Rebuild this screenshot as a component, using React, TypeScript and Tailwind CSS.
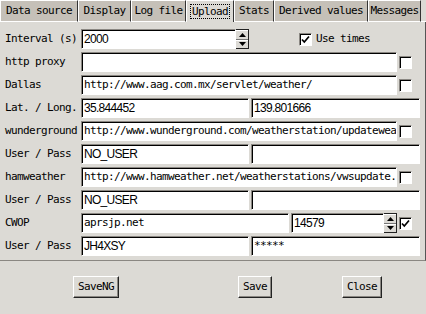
import React from 'react';

const MONO = { fontFamily: '"DejaVu Sans Mono", monospace' };

const tabs = [
  { name: 'Data source', w: 'w-[78px]' },
  { name: 'Display', w: 'w-[53px]' },
  { name: 'Log file', w: 'w-[55px]' },
  { name: 'Upload', w: 'w-[48px]', active: true },
  { name: 'Stats', w: 'w-[40px]' },
  { name: 'Derived values', w: 'w-[94px]' },
  { name: 'Messages', w: 'w-[53px]' },
];

const sunken =
  'border border-t-[#8a8782] border-l-[#8a8782] border-b-white border-r-white shadow-[inset_1px_1px_0_#000]';

const Field: React.FC<{ w: string; value?: string; mono?: boolean }> = ({ w, value = '', mono }) => (
  <div
    className={`${w} h-[20px] bg-white ${sunken} flex items-center pl-[2px] overflow-hidden whitespace-nowrap text-black ${
      mono ? 'text-[11px] tracking-[-0.62px]' : 'text-[12px] tracking-[-0.7px]'
    }`}
    style={mono ? MONO : { fontFamily: '"Liberation Sans", sans-serif' }}
  >
    {value}
  </div>
);

const Spinner: React.FC = () => (
  <div className="w-[13px] h-[20px] flex flex-col border-y border-r border-[#222] bg-[#dcdad5]">
    <div className="flex-1 flex items-center justify-center border-b border-[#777] border-t border-t-white">
      <svg width="7" height="4" viewBox="0 0 7 4"><path d="M3.5 0L7 4H0z" fill="#000" /></svg>
    </div>
    <div className="flex-1 flex items-center justify-center border-t border-t-white">
      <svg width="7" height="4" viewBox="0 0 7 4"><path d="M0 0H7L3.5 4z" fill="#000" /></svg>
    </div>
  </div>
);

const Check: React.FC<{ checked?: boolean }> = ({ checked }) => (
  <div className={`w-[13px] h-[13px] bg-white ${sunken} flex items-center justify-center`}>
    {checked && (
      <svg width="9" height="9" viewBox="0 0 9 9">
        <path d="M1 4.5L3.3 7L8 1.5" stroke="#000" strokeWidth="1.7" fill="none" />
      </svg>
    )}
  </div>
);

const Row: React.FC<{ label: string; children: React.ReactNode }> = ({ label, children }) => (
  <div className="flex items-center h-[20px]">
    <div className="w-[81px] pl-[5px] text-[11px] tracking-[-0.62px] text-black whitespace-nowrap" style={MONO}>
      {label}
    </div>
    {children}
  </div>
);

const Button: React.FC<{ label: string; w: string }> = ({ label, w }) => (
  <div
    className={`${w} h-[22px] flex items-center justify-center bg-[#dcdad5] border border-t-white border-l-white border-b-[#222] border-r-[#222] shadow-[inset_-1px_-1px_0_#8a8782] text-[11px] tracking-[-0.62px] text-black`}
    style={MONO}
  >
    {label}
  </div>
);

export default function App() {
  return (
    <div className="w-[426px] h-[314px] bg-[#dcdad5] overflow-hidden select-none">
      {/* Tab strip */}
      <div className="flex h-[22px] bg-[#dcdad5]">
        {tabs.map((t) => (
          <div
            key={t.name}
            className={`${t.w} h-[22px] flex items-center justify-center border-l border-l-white border-r border-r-[#333] border-t border-t-white text-[11px] tracking-[-0.62px] text-black ${
              t.active ? 'bg-[#dcdad5]' : 'bg-[#c5c0b8] border-b border-b-white'
            }`}
            style={MONO}
          >
            {t.active ? (
              <span className="border border-dotted border-black px-[1px] leading-[13px]">{t.name}</span>
            ) : (
              t.name
            )}
          </div>
        ))}
        <div className="flex-1 border-b border-b-white" />
      </div>

      {/* Panel */}
      <div className="h-[239px] border-r border-r-[#555] border-b border-b-[#8a8782] pt-[7px] flex flex-col gap-[3px]">
        <Row label="Interval (s)">
          <Field w="w-[155px]" value="2000" />
          <Spinner />
          <div className="ml-[50px] flex items-center gap-[4px]">
            <Check checked />
            <span className="text-[11px] tracking-[-0.62px]" style={MONO}>Use times</span>
          </div>
        </Row>
        <Row label="http proxy">
          <Field w="w-[316px]" mono />
          <div className="ml-[2px]"><Check /></div>
        </Row>
        <Row label="Dallas">
          <Field w="w-[316px]" mono value="http://www.aag.com.mx/servlet/weather/" />
          <div className="ml-[2px]"><Check /></div>
        </Row>
        <Row label="Lat. / Long.">
          <Field w="w-[168px]" value="35.844452" />
          <div className="ml-[2px]"><Field w="w-[169px]" value="139.801666" /></div>
        </Row>
        <Row label="wunderground">
          <Field w="w-[316px]" mono value="http://www.wunderground.com/weatherstation/updatewea" />
          <div className="ml-[2px]"><Check /></div>
        </Row>
        <Row label="User / Pass">
          <Field w="w-[168px]" value="NO_USER" />
          <div className="ml-[2px]"><Field w="w-[169px]" /></div>
        </Row>
        <Row label="hamweather">
          <Field w="w-[316px]" mono value="http://www.hamweather.net/weatherstations/vwsupdate." />
          <div className="ml-[2px]"><Check /></div>
        </Row>
        <Row label="User / Pass">
          <Field w="w-[168px]" value="NO_USER" />
          <div className="ml-[2px]"><Field w="w-[169px]" /></div>
        </Row>
        <Row label="CWOP">
          <Field w="w-[208px]" mono value="aprsjp.net" />
          <div className="ml-[2px] flex">
            <Field w="w-[93px]" value="14579" />
            <Spinner />
          </div>
          <div className="ml-[2px]"><Check checked /></div>
        </Row>
        <Row label="User / Pass">
          <Field w="w-[168px]" value="JH4XSY" />
          <div className="ml-[2px]"><Field w="w-[169px]" mono value="*****" /></div>
        </Row>
      </div>

      {/* Buttons */}
      <div className="flex pt-[15px]">
        <div className="ml-[73px]"><Button label="SaveNG" w="w-[46px]" /></div>
        <div className="ml-[119px]"><Button label="Save" w="w-[34px]" /></div>
        <div className="ml-[70px]"><Button label="Close" w="w-[40px]" /></div>
      </div>
    </div>
  );
}
